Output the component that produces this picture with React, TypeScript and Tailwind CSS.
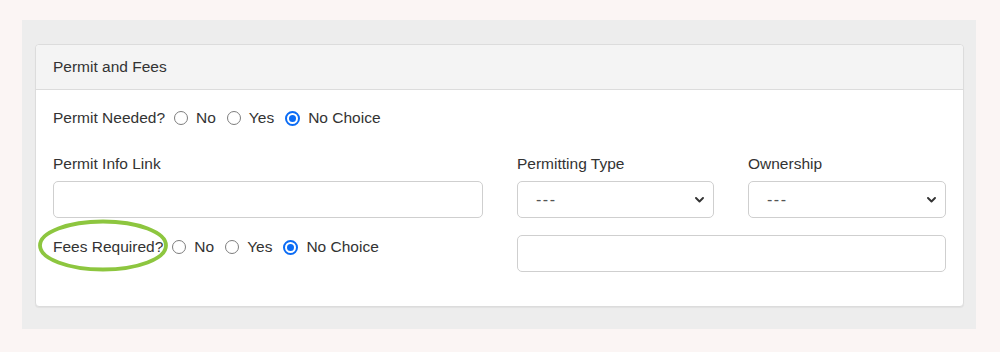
import React from "react";

const font = { fontFamily: '"Liberation Sans", Arial, Helvetica, sans-serif' };

function Radio({ checked }: { checked?: boolean }) {
  if (checked) {
    return (
      <span className="flex h-[15px] w-[15px] shrink-0 items-center justify-center rounded-full border-[2px] border-[#0b6cf5] bg-white">
        <span className="h-[7px] w-[7px] rounded-full bg-[#0b6cf5]" />
      </span>
    );
  }
  return <span className="block h-[14px] w-[14px] shrink-0 rounded-full border border-[#7d7d7d] bg-white" />;
}

function RadioGroup({ label, circled }: { label: string; circled?: boolean }) {
  return (
    <div className="relative flex h-[24px] items-center text-[15.5px] leading-[24px] text-[#333]">
      {circled && (
        <svg
          className="pointer-events-none absolute left-[-15px] top-[-16px]"
          width="132"
          height="53"
          viewBox="0 0 132 53"
        >
          <ellipse cx="65" cy="26.5" rx="63" ry="24" fill="none" stroke="#8dc63f" strokeWidth="3.8" />
        </svg>
      )}
      <span>{label}</span>
      <span className="ml-[9px] flex items-center gap-[8px]">
        <Radio />
        <span>No</span>
      </span>
      <span className="ml-[11px] flex items-center gap-[8px]">
        <Radio />
        <span>Yes</span>
      </span>
      <span className="ml-[11px] flex items-center gap-[8px]">
        <Radio checked />
        <span>No Choice</span>
      </span>
    </div>
  );
}

function Select() {
  return (
    <div className="flex h-[37px] items-center justify-between rounded-[5px] border border-[#cfcfcf] bg-white pl-[18px] pr-[9px]">
      <span className="text-[16px] tracking-[1.5px] text-[#555]">---</span>
      <svg width="9" height="6" viewBox="0 0 9 6">
        <path d="M1 1 L4.5 4.5 L8 1" fill="none" stroke="#333" strokeWidth="1.9" strokeLinecap="round" strokeLinejoin="round" />
      </svg>
    </div>
  );
}

export default function App() {
  return (
    <div className="h-[352px] w-[1000px] bg-[#fbf5f4] pl-[22px] pr-[24px] pt-[20px]" style={font}>
      <div className="bg-[#ededed] pb-[22px] pl-[13px] pr-[12px] pt-[24px]">
        <div className="rounded-[4px] border border-[#dcdcdc] bg-white shadow-[0_1px_1px_rgba(0,0,0,0.05)]">
          <div className="flex h-[45px] items-center rounded-t-[4px] border-b border-[#dcdcdc] bg-[#f4f4f4] px-[17px] text-[15.5px] text-[#333]">
            Permit and Fees
          </div>
          <div className="px-[17px] pb-[34px] pt-[16px]">
            <RadioGroup label="Permit Needed?" />
            <div className="mt-[23px] grid grid-cols-[430px_197px_198px] gap-x-[34px] text-[15.5px] text-[#333]">
              <div>
                <div className="mb-[6px] leading-[22px]">Permit Info Link</div>
                <div className="h-[37px] rounded-[5px] border border-[#cfcfcf] bg-white" />
              </div>
              <div>
                <div className="mb-[6px] leading-[22px]">Permitting Type</div>
                <Select />
              </div>
              <div>
                <div className="mb-[6px] leading-[22px]">Ownership</div>
                <Select />
              </div>
            </div>
            <div className="mt-[17px] grid grid-cols-[430px_429px] gap-x-[34px]">
              <RadioGroup label="Fees Required?" circled />
              <div className="h-[37px] rounded-[5px] border border-[#cfcfcf] bg-white" />
            </div>
          </div>
        </div>
      </div>
    </div>
  );
}
